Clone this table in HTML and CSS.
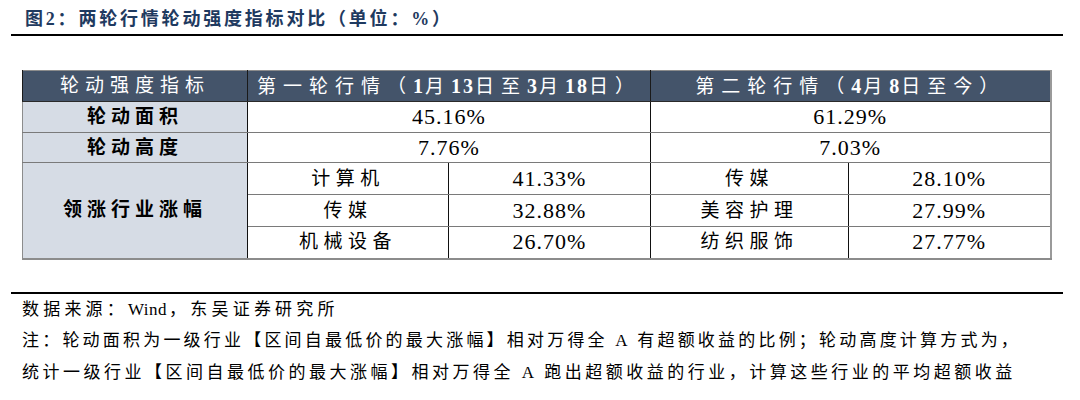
FILE: index.html
```html
<!DOCTYPE html>
<html lang="zh-CN">
<head>
<meta charset="utf-8">
<title>图2</title>
<link rel="stylesheet" href="styles.css">
</head>
<body>
<div class="page">
  <div class="title"><span>图2：两轮行情轮动强度指标对比（单位：%）</span></div>
  <div class="rule"></div>
  <table class="tbl">
    <colgroup>
      <col class="c1"><col class="c2"><col class="c3"><col class="c4"><col class="c5">
    </colgroup>
    <thead>
      <tr class="hrow">
        <th class="h1">轮动强度指标</th>
        <th colspan="2">第一轮行情（<b>1</b>月<b>13</b>日至<b>3</b>月<b>18</b>日）</th>
        <th colspan="2">第二轮行情（<b>4</b>月<b>8</b>日至今）</th>
      </tr>
    </thead>
    <tbody>
      <tr class="r1">
        <td class="lab">轮动面积</td>
        <td colspan="2" class="num">45.16%</td>
        <td colspan="2" class="num">61.29%</td>
      </tr>
      <tr class="r2">
        <td class="lab">轮动高度</td>
        <td colspan="2" class="num">7.76%</td>
        <td colspan="2" class="num">7.03%</td>
      </tr>
      <tr class="sr">
        <td class="lab" rowspan="3">领涨行业涨幅</td>
        <td class="ind">计算机</td>
        <td class="num">41.33%</td>
        <td class="ind">传媒</td>
        <td class="num">28.10%</td>
      </tr>
      <tr class="sr">
        <td class="ind">传媒</td>
        <td class="num">32.88%</td>
        <td class="ind">美容护理</td>
        <td class="num">27.99%</td>
      </tr>
      <tr class="sr">
        <td class="ind">机械设备</td>
        <td class="num">26.70%</td>
        <td class="ind">纺织服饰</td>
        <td class="num">27.77%</td>
      </tr>
    </tbody>
  </table>
  <div class="rule bottom"></div>
  <div class="notes">
    <div class="src">数据来源：<span class="lat">Wind</span>，东吴证券研究所</div>
    <div class="n1">注：轮动面积为一级行业【区间自最低价的最大涨幅】相对万得全 A 有超额收益的比例；轮动高度计算方式为，</div>
    <div class="n2">统计一级行业【区间自最低价的最大涨幅】相对万得全 A 跑出超额收益的行业，计算这些行业的平均超额收益</div>
  </div>
</div>
</body>
</html>
```

FILE: styles.css
```css
* { box-sizing: border-box; }
html, body { margin: 0; padding: 0; background: #fff; }
body {
  font-family: "Liberation Serif", "Noto Sans CJK SC", serif;
  color: #000;
  width: 1080px;
  height: 400px;
  overflow: hidden;
}
.page {
  padding: 0 17px 0 11px;
}
.title {
  height: 34px;
  display: flex;
  align-items: center;
  padding-left: 14px;
  font-size: 18px;
  font-weight: 700;
  color: #1f3a60;
  letter-spacing: 2.8px;
  white-space: nowrap;
}
.rule {
  height: 2px;
  background: #000;
}
.tbl {
  margin: 34px 0 0 11px;
  border-collapse: collapse;
  table-layout: fixed;
  width: 1028px;
  border: 1px solid #8c8c8c;
  border-right: 2px solid #9a9a9a;
  border-bottom: 2px solid #8c8c8c;
}
.c1 { width: 225px; }
.c2 { width: 201px; }
.c3 { width: 202px; }
.c4 { width: 198px; }
.c5 { width: 202px; }
.tbl th, .tbl td {
  padding: 0;
  text-align: center;
  white-space: nowrap;
  font-size: 19px;
  line-height: 20px;
}
.hrow th {
  height: 31px;
  background: #44546a;
  color: #fff;
  font-weight: 400;
  letter-spacing: 7px;
  border-left: 1px solid #1a1a1a;
  border-bottom: 1px solid #2a2a2a;
}
.hrow th.h1 { letter-spacing: 6px; }
.hrow th b { font-weight: 700; font-size: 20px; letter-spacing: 2px; }
.lab {
  background: #d6dce5;
  font-weight: 700;
  letter-spacing: 5px;
  border-right: 1px solid #111;
  border-bottom: 1px solid #8a8a8a;
}
.r1 td { height: 31px; }
.r2 td { height: 30px; }
.sr td { height: 32px; }
.tbl td {
  border-bottom: 1px solid #7a7a7a;
}
.tbl td.num, .tbl td.ind { border-left: 1px solid #111; }
.tbl td.num {
  font-size: 22px;
  letter-spacing: 1px;
}
.ind {
  letter-spacing: 5.5px;
}
.bottom {
  margin-top: 32px;
}
.notes {
  padding-left: 11px;
  font-size: 17px;
  white-space: nowrap;
}
.notes div {
  height: 31.5px;
  line-height: 31.5px;
}
.src { letter-spacing: 4.2px; }
.src .lat { letter-spacing: 0.5px; padding-right: 2px; }
.n1 { letter-spacing: 3.2px; }
.n2 { letter-spacing: 3.5px; }
```
